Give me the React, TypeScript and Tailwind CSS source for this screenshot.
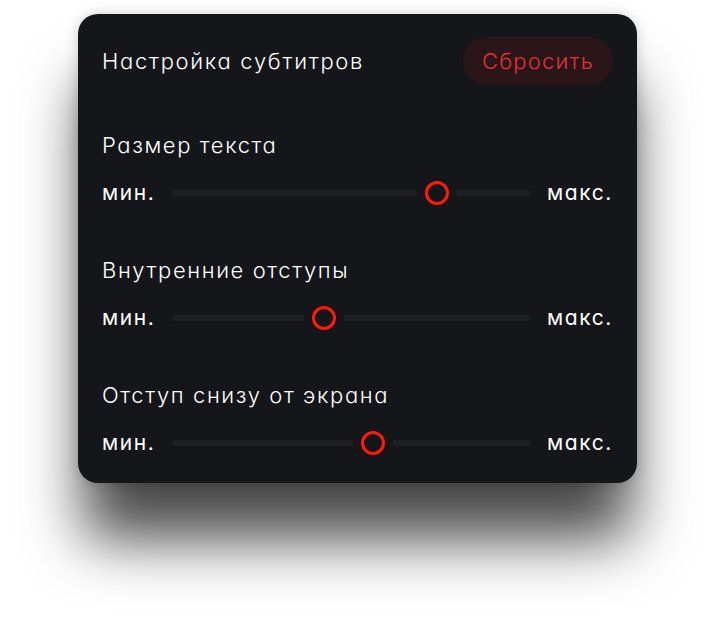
import React from "react";

const sliders = [
  { label: "Размер текста", value: 74 },
  { label: "Внутренние отступы", value: 42.5 },
  { label: "Отступ снизу от экрана", value: 56 },
];

function Slider({ value }: { value: number }) {
  return (
    <div className="relative h-6 flex-1 mx-[17px] flex items-center">
      <div className="h-[6px] w-full rounded-full bg-[#1f2024]" />
      <div
        className="absolute top-1/2 -translate-x-1/2 -translate-y-1/2 w-6 h-6 rounded-full border-[3px] border-[#ff1a0a] bg-[#15161a] shadow-[0_0_0_8px_#15161a]"
        style={{ left: `${value}%` }}
      />
    </div>
  );
}

export default function App() {
  return (
    <div
      className="min-h-[623px] bg-white pt-[14px]"
      style={{ fontFamily: "Inter, 'Noto Sans', sans-serif", fontFeatureSettings: "'cv11'" }}
    >
      <div className="mx-auto w-[559px] rounded-[20px] bg-[#15161a] px-6 pt-[23px] pb-[28px] text-white shadow-[0_62px_60px_-6px_rgba(0,0,0,0.72),0_0_14px_rgba(0,0,0,0.18)]">
        <div className="flex items-center justify-between h-12">
          <div className="text-[22px] font-light tracking-[1.7px]">Настройка субтитров</div>
          <button className="h-12 w-[150px] rounded-full bg-[#2a1618] text-[22px] font-light tracking-[1.2px] text-[#e8302f]">
            Сбросить
          </button>
        </div>
        {sliders.map((s, i) => (
          <div key={i} className={i === 0 ? "mt-[46px]" : "mt-[51px]"}>
            <div className="h-7 leading-7 text-[22px] font-light tracking-[1.6px]">{s.label}</div>
            <div className="mt-[22px] flex items-center h-6">
              <span className="text-[21px] font-normal leading-6 tracking-[1.6px]">мин.</span>
              <Slider value={s.value} />
              <span className="text-[21px] font-normal leading-6 tracking-[1.6px]">макс.</span>
            </div>
          </div>
        ))}
      </div>
    </div>
  );
}
